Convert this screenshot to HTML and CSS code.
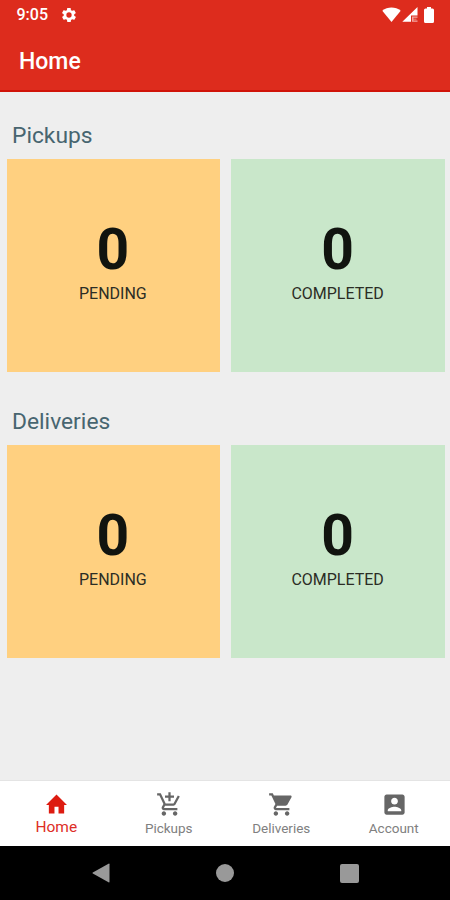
FILE: index.html
```html
<!DOCTYPE html>
<html lang="en">
<head>
<meta charset="utf-8">
<title>Home</title>
<link rel="stylesheet" href="styles.css">
</head>
<body>
<header class="header">
  <div class="status">
    <span class="time">9:05</span>
    <svg class="gear" viewBox="2 2 20 20"><path fill-rule="evenodd" d="M19.4 13c0-.3.1-.6.1-1s0-.7-.1-1l2.1-1.6c.2-.2.2-.4.1-.6l-2-3.5c-.1-.2-.4-.3-.6-.2l-2.5 1c-.5-.4-1.1-.7-1.7-1l-.4-2.6c0-.3-.2-.5-.5-.5h-4c-.3 0-.5.2-.5.4l-.4 2.700c-.6.2-1.100.6-1.700 1l-2.500-1c-.2-.1-.5 0-.6.2l-2 3.500c-.1.200-.1.500.1.600L4.500 11c0 .3-.1.600-.1 1s0 .7.1 1l-2.100 1.600c-.2.200-.2.400-.1.600l2 3.500c.1.200.4.300.6.200l2.500-1c.5.400 1.100.700 1.700 1l.4 2.600c0 .300.200.500.500.500h4c.300 0 .500-.200.500-.400l.400-2.700c.600-.200 1.100-.600 1.700-1l2.500 1c.200.100.500 0 .600-.200l2-3.500c.100-.200.100-.500-.100-.600zM12 15.800a3.800 3.800 0 1 1 0-7.600 3.800 3.800 0 0 1 0 7.600z"/></svg>
    <div class="signals">
      <svg class="wifi" viewBox="0 0 19 15"><path d="M9.500 15 .3 3.700C5.500-.6 13.500-.6 18.700 3.700z"/></svg>
      <svg class="cell" viewBox="0 0 16 15"><path d="M15.500 0v8.500H9v6.200H.3z"/><path class="dim" d="M10 9.500h5.500v1.200h-4.100v1h3.100v.8h-3.100v1h4.100v1.200H10z"/></svg>
      <svg class="battery" viewBox="0 0 10 16"><path d="M3 0h4v1.500h1.500Q10 1.500 10 3v11.500Q10 16 8.500 16h-7Q0 16 0 14.500V3q0-1.500 1.500-1.500H3z"/></svg>
    </div>
  </div>
  <h1 class="title">Home</h1>
</header>
<main class="content">
  <section class="group">
    <h2 class="heading">Pickups</h2>
    <div class="cards">
      <div class="card pending"><span class="count">0</span><span class="label">PENDING</span></div>
      <div class="card completed"><span class="count">0</span><span class="label">COMPLETED</span></div>
    </div>
  </section>
  <section class="group">
    <h2 class="heading">Deliveries</h2>
    <div class="cards">
      <div class="card pending"><span class="count">0</span><span class="label">PENDING</span></div>
      <div class="card completed"><span class="count">0</span><span class="label">COMPLETED</span></div>
    </div>
  </section>
</main>
<nav class="tabs">
  <a class="tab active">
    <svg viewBox="0 0 24 24"><path d="M10.200 20v-6h3.600v6h5v-7.500h2.500L12 3l-9.300 9.500h2.500V20z"/></svg>
    <span>Home</span>
  </a>
  <a class="tab">
    <svg viewBox="0 0 24 24"><path d="M11 9h2V6h3V4h-3V1h-2v3H8v2h3v3zm-4 9c-1.100 0-1.990.9-1.990 2S5.900 22 7 22s2-.9 2-2-.9-2-2-2zm10 0c-1.100 0-1.990.9-1.990 2s.89 2 1.990 2 2-.9 2-2-.9-2-2-2zm-9.830-3.250.03-.12.900-1.630h7.450c.75 0 1.410-.41 1.750-1.030l3.860-7.010L19.420 4h-.010l-1.100 2-2.760 5H8.530l-.13-.27L6.160 6l-.95-2-.94-2H1v2h2l3.600 7.590-1.350 2.450c-.16.28-.25.61-.25.96 0 1.100.9 2 2 2h12v-2H7.420c-.13 0-.25-.11-.25-.25z"/></svg>
    <span>Pickups</span>
  </a>
  <a class="tab">
    <svg viewBox="0 0 24 24"><path d="M7 18c-1.100 0-1.990.9-1.990 2S5.900 22 7 22s2-.9 2-2-.9-2-2-2zM1 2v2h2l3.600 7.590-1.350 2.450c-.16.28-.25.61-.25.96 0 1.100.9 2 2 2h12v-2H7.420c-.14 0-.25-.11-.25-.25l.03-.12.900-1.630h7.450c.75 0 1.410-.41 1.750-1.030l3.580-6.490c.08-.14.12-.31.12-.48 0-.55-.45-1-1-1H5.210l-.94-2H1zm16 16c-1.100 0-1.990.9-1.990 2s.89 2 1.990 2 2-.9 2-2-.9-2-2-2z"/></svg>
    <span>Deliveries</span>
  </a>
  <a class="tab">
    <svg viewBox="0 0 24 24"><path d="M3 5v14c0 1.100.89 2 2 2h14c1.100 0 2-.9 2-2V5c0-1.100-.9-2-2-2H5c-1.110 0-2 .9-2 2zm12 4c0 1.660-1.340 3-3 3s-3-1.340-3-3 1.340-3 3-3 3 1.340 3 3zm-9 8c0-2 4-3.100 6-3.100s6 1.100 6 3.100v1H6v-1z"/></svg>
    <span>Account</span>
  </a>
</nav>
<footer class="system">
  <svg class="back" viewBox="0 0 18 20"><path d="M17.500 1.200v17.600q0 1-1 .5L.8 10.600q-.8-.6 0-1.200L16.500.7q1-.5 1 .5z"/></svg>
  <span class="circle"></span>
  <span class="square"></span>
</footer>
</body>
</html>
```
FILE: styles.css
```css
* { box-sizing: border-box; }
body {
  margin: 0;
  height: 900px;
  display: flex;
  flex-direction: column;
  overflow: hidden;
  background: #eeeeee;
  font-family: Roboto, sans-serif;
}
svg { display: block; }
.header {
  height: 92px;
  background: #dd2c1d;
  border-bottom: 2px solid #d01308;
  color: #fff;
}
.status {
  height: 29px;
  display: flex;
  align-items: center;
  padding: 0 16px 0 16.5px;
}
.status svg { fill: #fff; }
.status .dim { fill: #f3a8a2; }
.time { font-size: 16px; font-weight: 500; width: 45.5px; }
.gear { width: 14px; height: 14px; }
.signals {
  margin-left: auto;
  display: flex;
  align-items: center;
}
.wifi { width: 19px; height: 15px; }
.cell { width: 16px; height: 15px; margin-left: 1px; }
.battery { width: 10px; height: 16px; margin-left: 6px; }
.title {
  margin: 0;
  padding-left: 19px;
  font-size: 23px;
  line-height: 66px;
  font-weight: 500;
}
.content { flex: 1; padding: 26px 5px 0 6.5px; }
.group { height: 286px; }
.heading {
  margin: 0;
  padding-left: 5.5px;
  height: 41px;
  line-height: 36px;
  font-size: 22.8px;
  font-weight: 400;
  color: #476570;
}
.cards {
  display: grid;
  grid-template-columns: 1fr 1fr;
  gap: 11px;
}
.card {
  height: 213px;
  padding-top: 61px;
  display: flex;
  flex-direction: column;
  align-items: center;
  color: #11140f;
}
.pending { background: #ffd080; }
.completed { background: #c9e7ca; }
.count { font-size: 57px; line-height: 60px; font-weight: 700; margin-right: 1px; }
.label { font-size: 16px; line-height: 27px; margin-right: 1px; color: #2b2d25; }
.tabs {
  height: 66px;
  display: flex;
  background: #fff;
  border-top: 1px solid #e4e4e4;
}
.tab {
  flex: 1;
  padding-top: 10px;
  display: flex;
  flex-direction: column;
  align-items: center;
  color: #808080;
  font-size: 13.5px;
  line-height: 20px;
}
.tab svg { width: 27px; height: 27px; margin-left: 1px; fill: #666; }
.tab.active { color: #dd2e26; font-size: 15.5px; line-height: 19px; }
.tab.active svg { fill: #dd1b10; }
.system {
  height: 54px;
  background: #000;
  display: flex;
  align-items: center;
  justify-content: space-between;
  padding: 0 91px 0 92px;
}
.back { width: 18px; height: 20px; fill: #999; }
.circle { width: 18px; height: 18px; border-radius: 50%; background: #999; }
.square { width: 19px; height: 19px; border-radius: 2px; background: #999; }
```
